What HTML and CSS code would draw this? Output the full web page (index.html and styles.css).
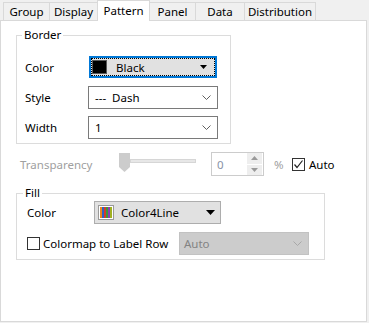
FILE: index.html
```html
<!DOCTYPE html>
<html>
<head>
<meta charset="utf-8">
<link rel="stylesheet" href="styles.css">
</head>
<body>
<div class="tabs">
  <div class="tab t-group">Group</div>
  <div class="tab t-display">Display</div>
  <div class="tab sel t-pattern">Pattern</div>
  <div class="tab after-sel t-panel">Panel</div>
  <div class="tab t-data">Data</div>
  <div class="tab last t-dist">Distribution</div>
</div>
<div class="panel">
  <div class="group g-border">
    <span class="legend">Border</span>
    <div class="row r1">
      <span class="lbl lbl-b">Color</span>
      <div class="combo focus">
        <div class="focus-in">
          <span class="swatch"></span>
          <span class="ctext">Black</span>
          <svg class="tri" width="7" height="4" viewBox="0 0 7 4"><polygon points="0,0 7,0 3.5,4" fill="#000"/></svg>
        </div>
      </div>
    </div>
    <div class="row r2">
      <span class="lbl lbl-b">Style</span>
      <div class="combo white">
        <span class="ctext">---&nbsp;&nbsp;Dash</span>
        <svg class="chev" width="9" height="5" viewBox="0 0 9 5"><polyline points="0.5,0.5 4.5,4.5 8.5,0.5" fill="none" stroke="#606060" stroke-width="1"/></svg>
      </div>
    </div>
    <div class="row r3">
      <span class="lbl lbl-b">Width</span>
      <div class="combo white">
        <span class="ctext">1</span>
        <svg class="chev" width="9" height="5" viewBox="0 0 9 5"><polyline points="0.5,0.5 4.5,4.5 8.5,0.5" fill="none" stroke="#606060" stroke-width="1"/></svg>
      </div>
    </div>
  </div>

  <div class="row trans">
    <span class="lbl-t">Transparency</span>
    <svg class="slider" width="77" height="24" viewBox="0 0 77 24">
      <rect x="11.5" y="7.5" width="65" height="3" fill="#e7e7e7" stroke="#d6d6d6"/>
      <polygon points="0,1 11,1 11,15 5.5,20 0,15" fill="#cccccc"/>
    </svg>
    <div class="spin">
      <span class="spin-val">0</span>
      <div class="spin-btns">
        <div class="sbtn"><svg width="7" height="4" viewBox="0 0 7 4"><polygon points="0,4 7,4 3.5,0" fill="#9a9a9a"/></svg></div>
        <div class="sbtn"><svg width="7" height="4" viewBox="0 0 7 4"><polygon points="0,0 7,0 3.5,4" fill="#9a9a9a"/></svg></div>
      </div>
    </div>
    <span class="pct">%</span>
    <span class="cbox checked"><svg width="11" height="11" viewBox="0 0 11 11"><polyline points="1.5,5.5 4,8.5 9.5,1.5" fill="none" stroke="#222" stroke-width="1.2"/></svg></span>
    <span class="auto">Auto</span>
  </div>

  <div class="group g-fill">
    <span class="legend legend-f">Fill</span>
    <div class="row f1">
      <span class="lbl lbl-f">Color</span>
      <div class="combo gray">
        <svg class="cmap" width="16" height="15" viewBox="0 0 16 15">
          <rect x="0.5" y="0.5" width="15" height="14" fill="#fff" stroke="#9a9a9a"/>
          <rect x="2" y="2" width="2" height="11" fill="#e8871e"/>
          <rect x="4" y="2" width="2" height="11" fill="#2f5fc8"/>
          <rect x="6" y="2" width="2" height="11" fill="#d23b2a"/>
          <rect x="8" y="2" width="2" height="11" fill="#3a9a3a"/>
          <rect x="10" y="2" width="2" height="11" fill="#8b3fb0"/>
          <rect x="12" y="2" width="2" height="11" fill="#a0b020"/>
        </svg>
        <span class="ctext ctext-f">Color4Line</span>
        <svg class="tri tri-f" width="9" height="5" viewBox="0 0 9 5"><polygon points="0,0 9,0 4.5,5" fill="#000"/></svg>
      </div>
    </div>
    <div class="row f2">
      <span class="cbox"></span>
      <span class="cmlabel">Colormap to Label Row</span>
      <div class="combo disabled">
        <span class="ctext dis-text">Auto</span>
        <svg class="chev" width="9" height="5" viewBox="0 0 9 5"><polyline points="0.5,0.5 4.5,4.5 8.5,0.5" fill="none" stroke="#a8a8a8" stroke-width="1"/></svg>
      </div>
    </div>
  </div>
</div>
</body>
</html>
```

FILE: styles.css
```css
html, body {
  margin: 0;
  padding: 0;
}
body {
  background: #f0f0f0;
  font-family: "Noto Sans", "DejaVu Sans", sans-serif;
  font-size: 11.5px;
  color: #000;
  width: 369px;
  height: 323px;
  overflow: hidden;
}

/* Tabs */
.tabs {
  display: flex;
  align-items: flex-end;
  height: 20px;
  padding-left: 3px;
}
.tab {
  box-sizing: border-box;
  height: 18px;
  border-top: 1px solid #d9d9d9;
  border-left: 1px solid #d9d9d9;
  background: #f0f0f0;
  text-align: center;
  line-height: 18px;
}
.tab.sel {
  height: 21px;
  margin-bottom: -1px;
  background: #fff;
  border-right: 1px solid #d9d9d9;
  position: relative;
  z-index: 1;
  line-height: 19px;
}
.tab.after-sel { border-left: none; }
.tab.last { border-right: 1px solid #d9d9d9; }
.t-group { width: 46px; }
.t-display { width: 48px; }
.t-pattern { width: 53px; }
.t-panel { width: 45px; }
.t-data { width: 49px; }
.t-dist { width: 72px; }

/* Panel */
.panel {
  box-sizing: border-box;
  width: 367px;
  height: 302px;
  background: #fff;
  border: 1px solid #d9d9d9;
  padding-top: 14px;
}

.group {
  box-sizing: border-box;
  border: 1px solid #dcdcdc;
  margin-left: 15px;
}
.g-border {
  width: 215px;
  height: 109px;
}
.legend {
  display: block;
  width: max-content;
  background: #fff;
  padding: 0 2px;
  margin-top: -9px;
  margin-left: 5px;
  height: 16px;
  line-height: 16px;
}
.legend-f { margin-left: 6px; }

.row {
  display: flex;
  align-items: center;
}
.r1 { margin-top: 13px; height: 22px; }
.r2 { margin-top: 8px; height: 23px; }
.r3 { margin-top: 7px; height: 23px; }

.lbl-b {
  box-sizing: border-box;
  width: 71px;
  padding-left: 8px;
}

.combo {
  box-sizing: border-box;
  display: flex;
  align-items: center;
  height: 100%;
}
.combo.white {
  width: 130px;
  background: #fff;
  border: 1px solid #7a7a7a;
  padding-left: 6px;
}
.chev {
  margin-left: auto;
  margin-right: 6px;
}
.combo.focus {
  width: 128px;
  margin-left: 1px;
  border: 2px solid #0078d7;
  background: #e1e1e1;
}
.focus-in {
  box-sizing: border-box;
  flex: 1;
  height: 100%;
  border: 1px dotted #000;
  display: flex;
  align-items: center;
}
.swatch {
  box-sizing: border-box;
  width: 15px;
  height: 14px;
  margin-left: 0;
  background: #000;
  border: 1px solid #5a5a5a;
}
.focus-in .ctext { margin-left: 9px; }
.tri {
  margin-left: auto;
  margin-right: 7px;
}

/* Transparency row */
.trans {
  margin-top: 8px;
  height: 24px;
  padding-left: 19px;
}
.lbl-t {
  width: 99px;
  color: #a0a0a0;
}
.slider { display: block; }
.spin {
  box-sizing: border-box;
  margin-left: 15px;
  width: 53px;
  height: 24px;
  border: 1px solid #cccccc;
  display: flex;
  align-items: center;
}
.spin-val {
  flex: 1;
  padding-left: 5px;
  color: #8a93a6;
}
.spin-btns {
  display: flex;
  flex-direction: column;
  gap: 1px;
  width: 15px;
  height: 22px;
  margin-right: 1px;
}
.sbtn {
  flex: 1;
  background: #eeeeee;
  display: flex;
  align-items: center;
  justify-content: center;
}
.sbtn svg { display: block; }
.pct {
  margin-left: 10px;
  color: #a0a0a0;
  width: 18px;
}
.cbox {
  box-sizing: border-box;
  width: 13px;
  height: 13px;
  border: 1px solid #333;
  background: #fff;
  display: flex;
  align-items: center;
  justify-content: center;
  flex: none;
}
.cbox svg { display: block; }
.auto { margin-left: 4px; }

/* Fill group */
.g-fill {
  width: 309px;
  height: 67px;
  margin-top: 17px;
}
.f1 { height: 23px; }
.lbl-f {
  box-sizing: border-box;
  width: 77px;
  padding-left: 10px;
}
.combo.gray {
  width: 127px;
  background: #e1e1e1;
  border: 1px solid #adadad;
}
.cmap {
  display: block;
  margin-left: 3px;
}
.ctext-f { margin-left: 7px; }
.tri-f { margin-right: 5px; }

.f2 {
  margin-top: 8px;
  height: 23px;
  padding-left: 10px;
}
.cmlabel {
  width: 136px;
  margin-left: 3px;
}
.combo.disabled {
  width: 130px;
  background: #cccccc;
  border: 1px solid #c2c2c2;
  padding-left: 4px;
}
.dis-text { color: #838383; }
```
